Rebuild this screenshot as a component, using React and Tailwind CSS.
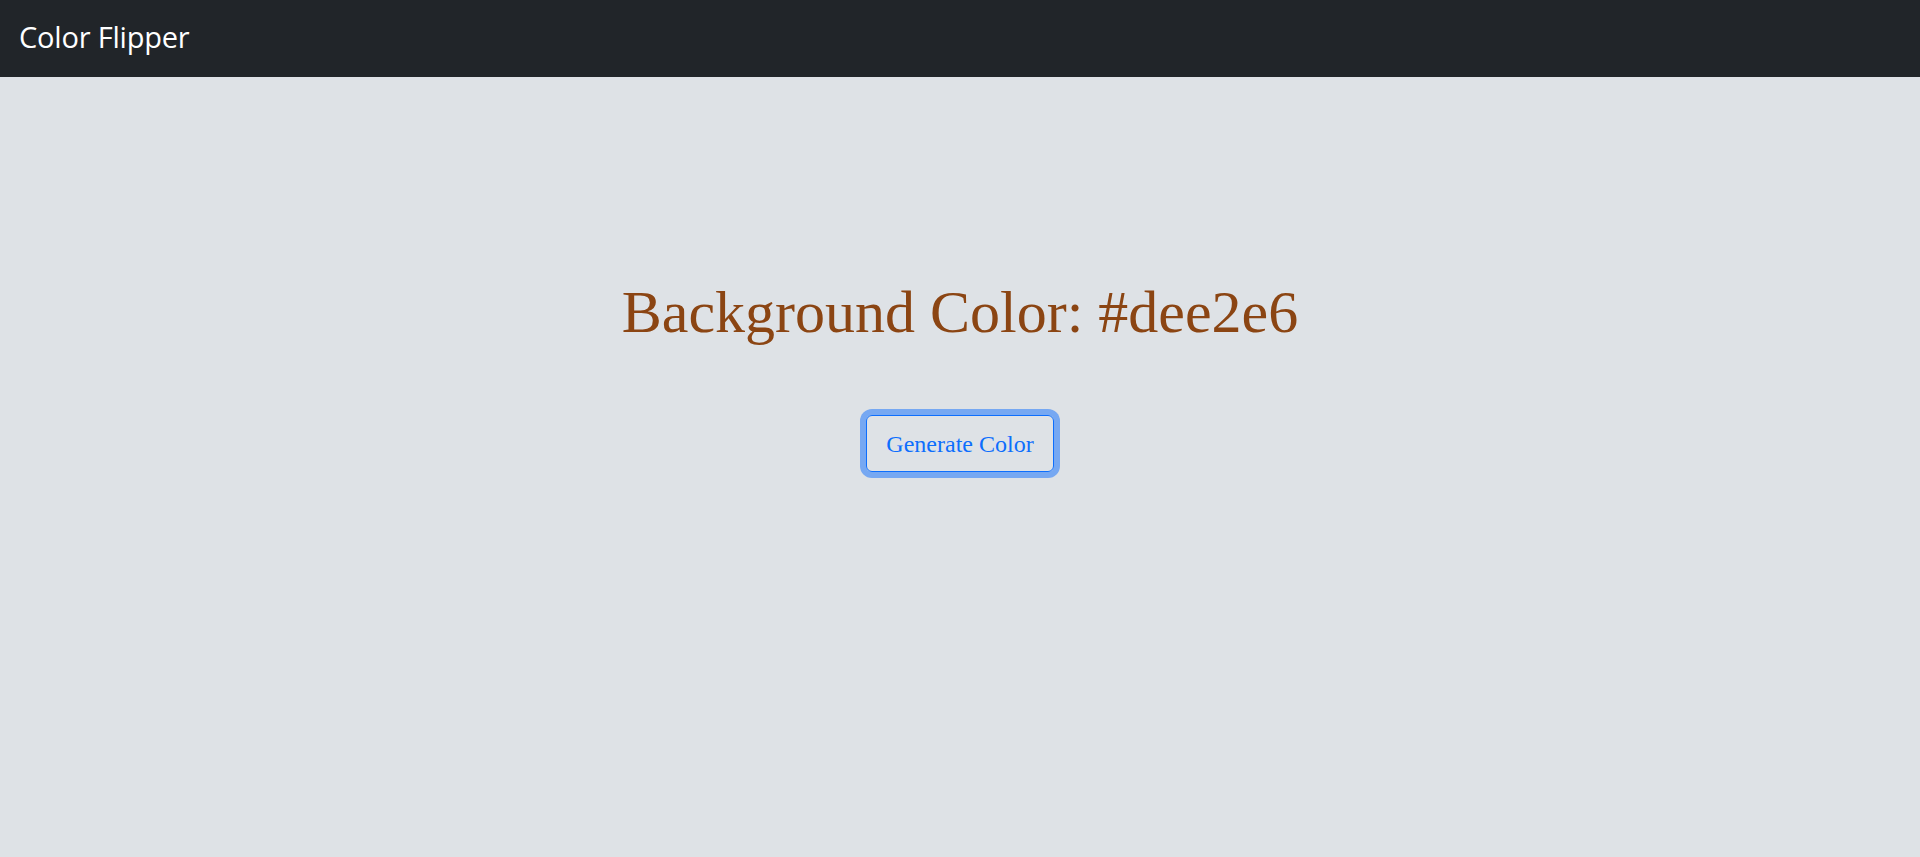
import React, { useState } from "react";

const App = () => {
  const [color, setColor] = useState("#dee2e6");

  const generate = () => {
    const hex = "#" + Math.floor(Math.random() * 0xffffff).toString(16).padStart(6, "0");
    setColor(hex);
  };

  return (
    <div className="min-h-screen bg-[#dee2e6]">
      {/* Top navbar */}
      <nav className="h-[77px] bg-[#212529] flex items-center px-[19px] pb-[4px]">
        <span className="text-white text-[29px] font-['Open_Sans',sans-serif] leading-none tracking-[-0.2px]">
          Color Flipper
        </span>
      </nav>

      {/* Centered content */}
      <div className="flex flex-col items-center pt-[199px]">
        <h1 className="text-[#8b4513] text-[60px] leading-[72px] font-['Liberation_Serif',serif]">
          Background Color: {color}
        </h1>
        <button
          onClick={generate}
          className="mt-[67px] px-[19px] h-[57px] rounded-[6px] border border-[#0d6efd] ring-[6px] ring-[#0d6efd]/50 text-[#0d6efd] text-[24px] font-['Liberation_Serif',serif]"
        >
          Generate Color
        </button>
      </div>
    </div>
  );
};

export default App;
